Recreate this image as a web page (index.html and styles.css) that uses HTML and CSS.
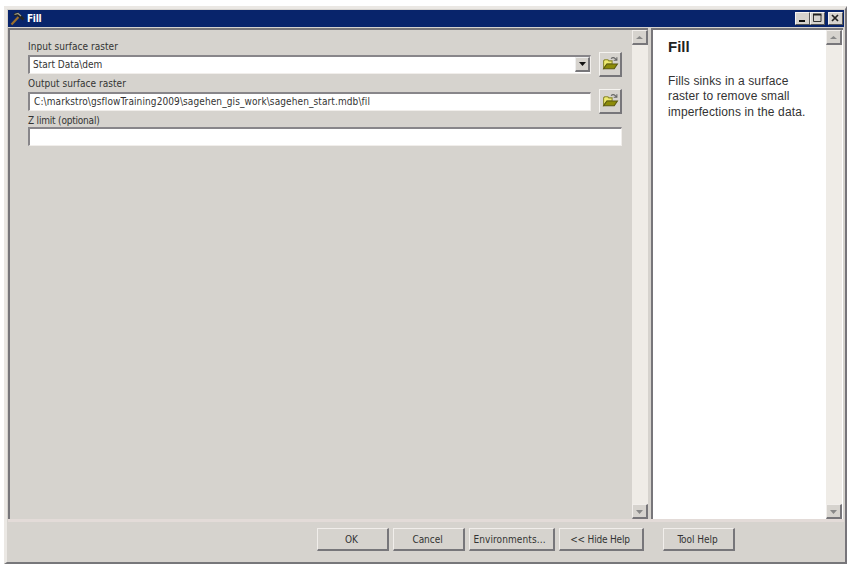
FILE: index.html
```
<!DOCTYPE html>
<html lang="en">
<head>
  <meta charset="UTF-8">
  <title>Fill</title>
  <link rel="stylesheet" href="styles.css">
</head>
<body>
  <svg width="0" height="0" class="defs">
    <symbol id="folder" viewBox="0 0 16 14">
      <path d="M1.500 11.500V4.500l1-1h3l1 1h3v3H5z" fill="#eeea70" stroke="#8a882c" stroke-width="1"/>
      <path d="M1.500 12 4.500 7.500H14.500L11.500 12z" fill="#8c8b08" stroke="#5b5a10" stroke-width="1"/>
      <path d="M8.500 2.500q2-2 4 0l1 1M14 1v3h-3" fill="none" stroke="#666" stroke-width="1"/>
    </symbol>
  </svg>

  <div class="window">
    <div class="titlebar">
      <svg class="hammer" width="15" height="15" viewBox="0 0 15 15">
        <path d="M1.500 13.500 8.500 6" stroke="#9c702c" stroke-width="2.200"/>
        <path d="M4 4 7.500 3l6 5.500" fill="none" stroke="#24241f" stroke-width="3"/>
        <path d="M4.500 3.500 8 2.500l3 2.500" fill="none" stroke="#a0a08e" stroke-width="1.200"/>
      </svg>
      <span class="title">Fill</span>
      <div class="controls">
        <div class="control"><svg width="14" height="12"><path d="M4 9h6" stroke="#111" stroke-width="2"/></svg></div>
        <div class="control"><svg width="14" height="12"><path d="M3.500 3v6.500h7.500V3" fill="none" stroke="#333"/><path d="M3 2.500h8.500" stroke="#222" stroke-width="2"/></svg></div>
        <div class="control close"><svg width="14" height="12"><path d="M4 3l6 6M10 3l-6 6" stroke="#222" stroke-width="1.700"/></svg></div>
      </div>
    </div>

    <div class="panels">
      <div class="panel form-panel">
        <div class="form">
          <label class="t-input">Input surface raster</label>
          <div class="row">
            <div class="field"><span>Start Data\dem</span>
              <div class="dropdown"><svg width="9" height="6"><path d="M1 1h7L4.500 5z" fill="#111"/></svg></div>
            </div>
            <div class="browse"><svg width="17" height="15"><use href="#folder"/></svg></div>
          </div>
          <label class="t-input">Output surface raster</label>
          <div class="row">
            <div class="field path"><span>C:\markstro\gsflowTraining2009\sagehen_gis_work\sagehen_start.mdb\fil</span></div>
            <div class="browse"><svg width="17" height="15"><use href="#folder"/></svg></div>
          </div>
          <label class="t-limit">Z limit (optional)</label>
          <div class="row limit-row">
            <div class="field wide"></div>
          </div>
        </div>
        <div class="scrollbar">
          <div class="arrow"><svg width="7" height="5"><path d="M0 4h7L3.500 1z" fill="#888"/></svg></div>
          <div class="arrow"><svg width="7" height="5"><path d="M0 1h7L3.500 5z" fill="#888"/></svg></div>
        </div>
      </div>
      <div class="panel help-panel">
        <div class="help">
          <h1>Fill</h1>
          <p>Fills sinks in a surface<br>raster to remove small<br>imperfections in the data.</p>
        </div>
        <div class="scrollbar">
          <div class="arrow"><svg width="7" height="5"><path d="M0 4h7L3.500 1z" fill="#888"/></svg></div>
          <div class="arrow"><svg width="7" height="5"><path d="M0 1h7L3.500 5z" fill="#888"/></svg></div>
        </div>
      </div>
    </div>

    <div class="buttons">
      <div class="btn">OK</div>
      <div class="btn">Cancel</div>
      <div class="btn env">Environments...</div>
      <div class="btn hide">&lt;&lt; Hide Help</div>
      <div class="btn tool">Tool Help</div>
    </div>
  </div>
</body>
</html>
```

FILE: styles.css
```
* {
  box-sizing: border-box;
}

body {
  margin: 0;
  padding: 6px 0 0 4px;
  height: 572px;
  overflow: hidden;
  background: #fff;
  color: #333;
  font-family: "DejaVu Sans Condensed", "DejaVu Sans", sans-serif;
  font-size: 10px;
}

svg {
  display: block;
}

.defs {
  position: absolute;
}

.window {
  display: flex;
  flex-direction: column;
  width: 843px;
  height: 558px;
  padding: 1px 1px 0 1px;
  background: #d6d3ce;
  border: 3px solid #ebe8e4;
  border-right: 2px solid #77757a;
  border-bottom: 2px solid #77777a;
}

.titlebar {
  display: flex;
  align-items: center;
  width: 836px;
  height: 17px;
  padding: 0 1px 0 2px;
  background: #08246b;
}

.title {
  margin-left: 2px;
  color: #fff;
  font-weight: bold;
  letter-spacing: -0.3px;
}

.controls {
  display: flex;
  margin-left: auto;
}

.control {
  width: 15px;
  height: 13px;
  background: #d6d3ce;
  border: 1px solid #f5f3f0;
  border-right-color: #555;
  border-bottom-color: #555;
}

.control svg {
  margin: -1px;
}

.close {
  margin-left: 3px;
}

.panels {
  display: flex;
  gap: 3px;
  height: 494px;
  margin-top: 1px;
  border-bottom: 3px solid #e3dbd8;
}

.panel {
  display: flex;
  border-top: 2px solid #77767a;
  border-left: 2px solid #77767a;
}

.form-panel {
  width: 640px;
}

.help-panel {
  width: 192px;
  background: #fff;
}

.form {
  display: flex;
  flex-direction: column;
  flex: 1;
  padding: 8px 0 0 18px;
}

label {
  height: 15px;
  line-height: 17px;
  white-space: nowrap;
}

.t-input {
  letter-spacing: 0.05px;
}

.t-limit {
  letter-spacing: -0.2px;
}

.row {
  display: flex;
  align-items: center;
  gap: 8px;
  height: 22px;
}

.limit-row {
  margin-top: -2px;
}

.field {
  display: flex;
  align-items: center;
  width: 563px;
  height: 19px;
  padding-left: 3px;
  background: #fff;
  border: 1px solid #f1eeeb;
  border-top: 2px solid #88868a;
  border-left: 2px solid #88868a;
  white-space: nowrap;
}

.path {
  padding-left: 4px;
  letter-spacing: 0.1px;
}

.wide {
  width: 594px;
}

.dropdown {
  display: flex;
  align-items: center;
  justify-content: center;
  width: 15px;
  height: 15px;
  margin-left: auto;
  background: #d6d3ce;
  border: 1px solid #eee;
  border-right: 2px solid #77767a;
  border-bottom: 2px solid #77767a;
}

.browse {
  display: flex;
  align-items: center;
  justify-content: center;
  flex: none;
  width: 23px;
  height: 25px;
  background: #d6d3ce;
  border: 1px solid #f5f3f0;
  border-right: 2px solid #77767a;
  border-bottom: 2px solid #77767a;
}

.scrollbar {
  display: flex;
  flex-direction: column;
  justify-content: space-between;
  width: 16px;
  background: #efece7;
}

.arrow {
  display: flex;
  align-items: center;
  justify-content: center;
  height: 15px;
  background: #d6d3ce;
  border: 1px solid #f1eeeb;
  border-right: 2px solid #77767a;
  border-bottom: 2px solid #77767a;
}

.help {
  flex: 1;
  padding: 9px 0 0 15px;
  font-family: "Liberation Sans", Arial, sans-serif;
  white-space: nowrap;
}

h1 {
  margin: 0;
  color: #222;
  font-size: 15px;
  line-height: 16px;
}

p {
  margin: 19px 0 0;
  font-size: 12px;
  line-height: 15.3px;
  letter-spacing: 0.13px;
}

.help-panel .scrollbar {
  margin-right: 1px;
}

.buttons {
  display: flex;
  gap: 4px;
  padding: 6px 0 0 309px;
}

.btn {
  display: flex;
  align-items: center;
  justify-content: center;
  width: 72px;
  height: 23px;
  padding-right: 2px;
  border: 1px solid #f1eeeb;
  border-right: 2px solid #77767a;
  border-bottom: 2px solid #77767a;
  letter-spacing: -0.05px;
  white-space: nowrap;
}

.env {
  width: 86px;
  padding-right: 4px;
  letter-spacing: 0.1px;
}

.hide {
  width: 85px;
  letter-spacing: -0.2px;
}

.tool {
  margin-left: 15px;
}
```
